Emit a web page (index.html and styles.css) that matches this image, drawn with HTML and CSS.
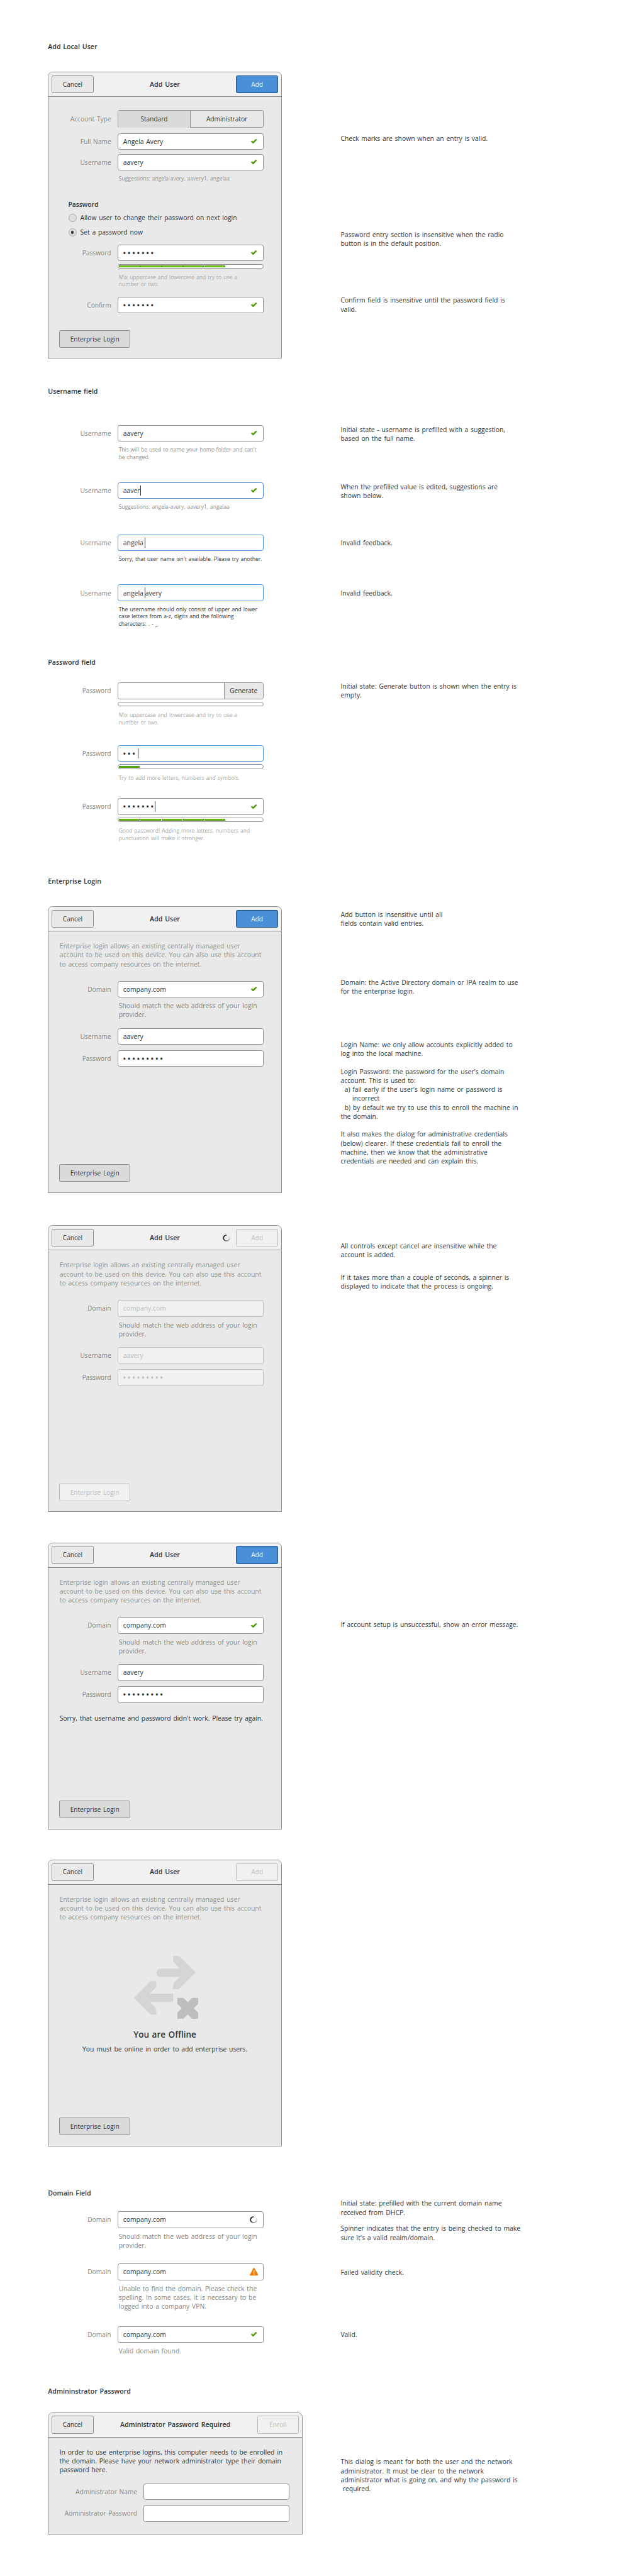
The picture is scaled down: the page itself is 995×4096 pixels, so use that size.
FILE: index.html
```
<!DOCTYPE html>
<html lang="en">
<head>
<meta charset="utf-8">
<title>Add User</title>
<link rel="stylesheet" href="styles.css">
</head>
<body>
<svg class="defs" width="0" height="0" aria-hidden="true">
  <symbol id="check" viewBox="0 0 11 9"><path d="M1.7 4.7 4.1 7 9.3 1.7" fill="none" stroke="#4e9a06" stroke-width="3" stroke-linecap="round"/></symbol>
  <symbol id="warning" viewBox="0 0 16 15"><path d="M8 0C8.6 0 9 .3 9.3.9L15.8 13.2C16.3 14.2 15.8 15 14.8 15H1.2C.2 15-.3 14.2.2 13.2L6.7.9C7 .3 7.4 0 8 0Z" fill="#f57900"/><path d="M7.1 4.2H8.9V10H7.1ZM7.1 11.2H8.9V13H7.1Z" fill="#fff"/></symbol>
</svg>
<main class="sheet">

<section class="section s-local">
  <h2>Add Local User</h2>
  <div class="specimens">
    <div class="dialog">
      <header class="bar"><span class="btn">Cancel</span><b class="title">Add User</b><span class="btn primary">Add</span></header>
      <div class="body">
        <div class="field tall"><label>Account Type</label><div class="switch"><span class="on">Standard</span><span>Administrator</span></div></div>
        <div class="field g10"><label>Full Name</label><div class="entry">Angela Avery<svg class="check"><use href="#check"/></svg></div></div>
        <div class="field g8"><label>Username</label><div class="entry">aavery<svg class="check"><use href="#check"/></svg></div></div>
        <p class="hint">Suggestions: angela-avery, aavery1, angelaa</p>
        <h3 class="group">Password</h3>
        <div class="radio r1"><i></i>Allow user to change their password on next login</div>
        <div class="radio r2"><i class="sel"></i>Set a password now</div>
        <div class="field g15"><label>Password</label><div class="entry"><span class="dots">•••••••</span><svg class="check"><use href="#check"/></svg></div></div>
        <div class="meter"><i></i><i></i><i></i><i></i><i></i></div>
        <p class="hint faint">Mix uppercase and lowercase and try to use a<br>number or two.</p>
        <div class="field g15"><label>Confirm</label><div class="entry"><span class="dots">•••••••</span><svg class="check"><use href="#check"/></svg></div></div>
        <span class="btn mode">Enterprise Login</span>
      </div>
    </div>
    <div class="notes">
      <p class="n-check">Check marks are shown when an entry is valid.</p>
      <p class="n-section">Password entry section is insensitive when the radio<br>button is in the default position.</p>
      <p class="n-confirm">Confirm field is insensitive until the password field is<br>valid.</p>
    </div>
  </div>
</section>

<section class="section s-username">
  <h2>Username field</h2>
  <div class="specimens">
    <div class="free">
      <div class="field"><label>Username</label><div class="entry">aavery<svg class="check"><use href="#check"/></svg></div></div>
      <p class="hint">This will be used to name your home folder and can't<br>be changed.</p>
    </div>
    <div class="notes"><p class="n-two">Initial state - username is prefilled with a suggestion,<br>based on the full name.</p></div>
    <div class="free">
      <div class="field"><label>Username</label><div class="entry focus">aaver<i class="caret"></i><svg class="check"><use href="#check"/></svg></div></div>
      <p class="hint">Suggestions: angela-avery, aavery1, angelaa</p>
    </div>
    <div class="notes"><p class="n-two">When the prefilled value is edited, suggestions are<br>shown below.</p></div>
    <div class="free">
      <div class="field"><label>Username</label><div class="entry focus">angela<i class="caret gap"></i></div></div>
      <p class="hint dark">Sorry, that user name isn't available. Please try another.</p>
    </div>
    <div class="notes"><p class="n-one">Invalid feedback.</p></div>
    <div class="free">
      <div class="field"><label>Username</label><div class="entry focus">angela<i class="caret gap"></i>avery</div></div>
      <p class="hint dark">The username should only consist of upper and lower<br>case letters from a-z, digits and the following<br>characters: . - _</p>
    </div>
    <div class="notes"><p class="n-one">Invalid feedback.</p></div>
  </div>
</section>

<section class="section s-password">
  <h2>Password field</h2>
  <div class="specimens">
    <div class="free">
      <div class="field"><label>Password</label><div class="entry"><span class="generate">Generate</span></div></div>
      <div class="meter"></div>
      <p class="hint faint">Mix uppercase and lowercase and try to use a<br>number or two.</p>
    </div>
    <div class="notes"><p class="n-gen">Initial state: Generate button is shown when the entry is<br>empty.</p></div>
    <div class="free">
      <div class="field"><label>Password</label><div class="entry focus"><span class="dots">•••</span><i class="caret gap"></i></div></div>
      <div class="meter"><i></i></div>
      <p class="hint faint">Try to add more letters, numbers and symbols.</p>
    </div>
    <div class="notes"></div>
    <div class="free">
      <div class="field"><label>Password</label><div class="entry"><span class="dots">•••••••</span><i class="caret"></i><svg class="check"><use href="#check"/></svg></div></div>
      <div class="meter"><i></i><i></i><i></i><i></i><i></i></div>
      <p class="hint faint">Good password! Adding more letters, numbers and<br>punctuation will make it stronger.</p>
    </div>
    <div class="notes"></div>
  </div>
</section>

<section class="section s-enterprise">
  <h2>Enterprise Login</h2>
  <div class="specimens">
    <div class="dialog">
      <header class="bar"><span class="btn">Cancel</span><b class="title">Add User</b><span class="btn primary">Add</span></header>
      <div class="body">
        <p class="intro">Enterprise login allows an existing centrally managed user<br>account to be used on this device. You can also use this account<br>to access company resources on the internet.</p>
        <div class="field g24"><label>Domain</label><div class="entry">company.com<svg class="check"><use href="#check"/></svg></div></div>
        <p class="help">Should match the web address of your login<br>provider.</p>
        <div class="field g17"><label>Username</label><div class="entry">aavery</div></div>
        <div class="field g10"><label>Password</label><div class="entry"><span class="dots">•••••••••</span></div></div>
        <span class="btn mode">Enterprise Login</span>
      </div>
    </div>
    <div class="notes">
      <p class="n-add">Add button is insensitive until all<br>fields contain valid entries.</p>
      <p class="n-domain">Domain: the Active Directory domain or IPA realm to use<br>for the enterprise login.</p>
      <p class="n-login">Login Name: we only allow accounts explicitly added to<br>log into the local machine.</p>
      <p class="n-para">Login Password: the password for the user's domain<br>account. This is used to:<br><span class="in1">a) fail early if the user's login name or password is</span><br><span class="in2">incorrect</span><br><span class="in1">b) by default we try to use this to enroll the machine in</span><br>the domain.</p>
      <p class="n-para">It also makes the dialog for administrative credentials<br>(below) clearer. If these credentials fail to enroll the<br>machine, then we know that the administrative<br>credentials are needed and can explain this.</p>
    </div>

    <div class="dialog busy">
      <header class="bar"><span class="btn">Cancel</span><b class="title">Add User</b><i class="spinner"></i><span class="btn off">Add</span></header>
      <div class="body">
        <p class="intro">Enterprise login allows an existing centrally managed user<br>account to be used on this device. You can also use this account<br>to access company resources on the internet.</p>
        <div class="field g24"><label>Domain</label><div class="entry">company.com</div></div>
        <p class="help">Should match the web address of your login<br>provider.</p>
        <div class="field g17"><label>Username</label><div class="entry">aavery</div></div>
        <div class="field g10"><label>Password</label><div class="entry"><span class="dots">•••••••••</span></div></div>
        <span class="btn mode off">Enterprise Login</span>
      </div>
    </div>
    <div class="notes">
      <p class="n-all">All controls except cancel are insensitive while the<br>account is added.</p>
      <p class="n-spin">If it takes more than a couple of seconds, a spinner is<br>displayed to indicate that the process is ongoing.</p>
    </div>

    <div class="dialog">
      <header class="bar"><span class="btn">Cancel</span><b class="title">Add User</b><span class="btn primary">Add</span></header>
      <div class="body">
        <p class="intro">Enterprise login allows an existing centrally managed user<br>account to be used on this device. You can also use this account<br>to access company resources on the internet.</p>
        <div class="field g24"><label>Domain</label><div class="entry">company.com<svg class="check"><use href="#check"/></svg></div></div>
        <p class="help">Should match the web address of your login<br>provider.</p>
        <div class="field g17"><label>Username</label><div class="entry">aavery</div></div>
        <div class="field g10"><label>Password</label><div class="entry"><span class="dots">•••••••••</span></div></div>
        <p class="error">Sorry, that username and password didn't work. Please try again.</p>
        <span class="btn mode">Enterprise Login</span>
      </div>
    </div>
    <div class="notes"><p class="n-fail">If account setup is unsuccessful, show an error message.</p></div>

    <div class="dialog">
      <header class="bar"><span class="btn">Cancel</span><b class="title">Add User</b><span class="btn off">Add</span></header>
      <div class="body">
        <p class="intro">Enterprise login allows an existing centrally managed user<br>account to be used on this device. You can also use this account<br>to access company resources on the internet.</p>
        <svg class="offline" viewBox="0 0 123 120.5">
          <path fill="#d4d4d4" d="M75 0H83Q86.500 0 89 3L118 32 89 61Q86.500 64 83 64H75V57Q75 53.500 77.500 51L87.500 40.500H51A8 8 0 0 1 51 24.500H87.500L77.500 14Q75 11.500 75 8Z"/>
          <path fill="#d4d4d4" d="M43 48.500H35Q31.500 48.500 29 51.500L0 80.400 29 109.500Q31.500 112.500 35 112.500H43V105.500Q43 101.500 40.500 99L30 88.400H75V72.300H30L40.500 62Q43 59.500 43 56Z"/>
          <path fill="#bebebe" d="M83 80.400H94.500L103 88.700 111.500 80.400H123V92L114.500 100.500 123 109V120.500H111.500L103 112.300 94.500 120.500H83V109L91.500 100.500 83 92Z"/>
        </svg>
        <h3 class="big">You are Offline</h3>
        <p class="sub">You must be online in order to add enterprise users.</p>
        <span class="btn mode">Enterprise Login</span>
      </div>
    </div>
    <div class="notes"></div>
  </div>
</section>

<section class="section s-domain">
  <h2>Domain Field</h2>
  <div class="specimens">
    <div class="free">
      <div class="field"><label>Domain</label><div class="entry">company.com<i class="spinner"></i></div></div>
      <p class="help">Should match the web address of your login<br>provider.</p>
    </div>
    <div class="notes"><p class="n-dhcp">Initial state: prefilled with the current domain name<br>received from DHCP.</p><p class="n-realm">Spinner indicates that the entry is being checked to make<br>sure it's a valid realm/domain.</p></div>
    <div class="free">
      <div class="field"><label>Domain</label><div class="entry">company.com<svg class="warning"><use href="#warning"/></svg></div></div>
      <p class="help">Unable to find the domain. Please check the<br>spelling. In some cases, it is necessary to be<br>logged into a company VPN.</p>
    </div>
    <div class="notes"><p class="n-one">Failed validity check.</p></div>
    <div class="free">
      <div class="field"><label>Domain</label><div class="entry">company.com<svg class="check"><use href="#check"/></svg></div></div>
      <p class="help">Valid domain found.</p>
    </div>
    <div class="notes"><p class="n-one">Valid.</p></div>
  </div>
</section>

<section class="section s-admin">
  <h2>Admininstrator Password</h2>
  <div class="specimens">
    <div class="dialog wide">
      <header class="bar"><span class="btn">Cancel</span><b class="title">Administrator Password Required</b><span class="btn off">Enroll</span></header>
      <div class="body">
        <p class="intro dark">In order to use enterprise logins, this computer needs to be enrolled in<br>the domain. Please have your network administrator type their domain<br>password here.</p>
        <div class="field g17"><label>Administrator Name</label><div class="entry"></div></div>
        <div class="field g10"><label>Administrator Password</label><div class="entry"></div></div>
      </div>
    </div>
    <div class="notes"><p class="n-admin">This dialog is meant for both the user and the network<br>administrator. It must be clear to the network<br>administrator what is going on, and why the password is<br><span class="in0">required.</span></p></div>
  </div>
</section>

</main>
</body>
</html>
```
FILE: styles.css
```
/* All measures are multiples of one drawing unit. */
:root {
  --u: .829167px;
  --line: #8e908e;
  --ink: #2e3436;
  --dim: #858783;
}
* { box-sizing: border-box; }
body {
  margin: 0;
  background: #fff;
  color: var(--ink);
  font-family: "Open Sans", "Noto Sans", sans-serif;
  font-size: calc(12.5 * var(--u));
  line-height: calc(17.25 * var(--u));
  word-spacing: calc(1.3 * var(--u));
  white-space: nowrap;
}
h2, h3, p { margin: 0; font-size: inherit; font-weight: inherit; }
.defs { position: absolute; }
.sheet { height: calc(4940 * var(--u)); padding: calc(80 * var(--u)) 0 0 calc(92 * var(--u)); overflow: hidden; }

.section h2 {
  height: calc(20 * var(--u));
  line-height: calc(20 * var(--u));
  font-size: calc(12.8 * var(--u));
  font-weight: 600;
}
.specimens { display: grid; grid-template-columns: calc(561 * var(--u)) 1fr; align-items: start; }
.s-local .specimens { margin-top: calc(38 * var(--u)); grid-template-rows: calc(602 * var(--u)); }
.s-username .specimens { margin-top: calc(55 * var(--u)); grid-template-rows: calc(110 * var(--u)) calc(100 * var(--u)) calc(96 * var(--u)) calc(139 * var(--u)); }
.s-password .specimens { margin-top: calc(29 * var(--u)); grid-template-rows: calc(120 * var(--u)) calc(102 * var(--u)) calc(149 * var(--u)); }
.s-enterprise .specimens { margin-top: calc(38 * var(--u)); grid-template-rows: calc(612 * var(--u)) calc(608 * var(--u)) calc(608 * var(--u)) calc(630 * var(--u)); }
.s-domain .specimens { margin-top: calc(25 * var(--u)); grid-template-rows: calc(100 * var(--u)) calc(120 * var(--u)) calc(115 * var(--u)); }
.s-admin .specimens { margin-top: calc(30 * var(--u)); }

/* dialogs */
.dialog {
  display: flex;
  flex-direction: column;
  width: calc(448 * var(--u));
  height: calc(550 * var(--u));
  border: 1px solid var(--line);
  border-radius: calc(9 * var(--u)) calc(9 * var(--u)) 0 0;
  background: #e9e9e9;
}
.dialog.wide { width: calc(488 * var(--u)); height: calc(234 * var(--u)); }
.bar {
  display: grid;
  grid-template-columns: calc(80 * var(--u)) 1fr calc(80 * var(--u));
  align-items: center;
  height: calc(47 * var(--u));
  padding: 0 calc(6 * var(--u));
  border-bottom: 1px solid var(--line);
  border-radius: calc(8 * var(--u)) calc(8 * var(--u)) 0 0;
  background: #f1f1f1;
}
.busy .bar { grid-template-columns: calc(80 * var(--u)) 1fr calc(14 * var(--u)) calc(80 * var(--u)); }
.busy .bar .title { padding-left: calc(14 * var(--u)); }
.busy .bar .spinner { margin: 0 calc(12 * var(--u)) 0 calc(-12 * var(--u)); }
.title { font-size: calc(12.8 * var(--u)); font-weight: 600; text-align: center; }
.btn {
  display: flex;
  align-items: center;
  justify-content: center;
  height: calc(34 * var(--u));
  border: 1px solid var(--line);
  border-radius: calc(3 * var(--u));
  background: #e9e9e9;
  font-size: calc(12.2 * var(--u));
}
.btn.primary { border-color: #1c5187; background: #4a90d9; color: #f1f5fa; }
.btn.off { border-color: #bcbdbc; background: #f1f1f1; color: #bebfbe; }
.btn.mode { width: calc(137 * var(--u)); margin: auto 0 0 calc(20 * var(--u)); background: #dadada; }
.btn.mode.off { background: #f1f1f1; }
.body { display: flex; flex-direction: column; flex: 1; padding-bottom: calc(20 * var(--u)); }
.s-local .body { padding-top: calc(25 * var(--u)); }

/* form rows */
.field {
  display: grid;
  grid-template-columns: calc(121 * var(--u)) calc(280 * var(--u));
  column-gap: calc(12 * var(--u));
  align-items: center;
  height: calc(32 * var(--u));
}
.dialog .field { margin-left: -1px; }
.wide .field { grid-template-columns: calc(171 * var(--u)) calc(280 * var(--u)); }
.field.tall { height: calc(34 * var(--u)); }
.field label {
  color: var(--dim);
  font-size: calc(12.3 * var(--u));
  text-align: right;
}
.g8 { margin-top: calc(8 * var(--u)); }
.g10 { margin-top: calc(10 * var(--u)); }
.g15 { margin-top: calc(15.4 * var(--u)); }
.g17 { margin-top: calc(17 * var(--u)); }
.g24 { margin-top: calc(24 * var(--u)); }
.entry {
  display: flex;
  align-items: center;
  height: calc(32 * var(--u));
  padding: 0 calc(11 * var(--u)) 0 calc(10 * var(--u));
  border: 1px solid var(--line);
  border-radius: calc(4 * var(--u));
  background: #fff;
}
.entry.focus { border-color: #4a90d9; }
.busy .entry { border-color: #bcbdbc; background: #f1f1f1; color: #bebfbe; }
.dots { margin-left: calc(-1 * var(--u)); font-size: calc(18 * var(--u)); letter-spacing: calc(2.1 * var(--u)); }
.caret { width: 1px; height: calc(20 * var(--u)); background: var(--ink); }
.caret.gap { margin-left: calc(2.5 * var(--u)); }
.check { width: calc(11 * var(--u)); height: calc(9 * var(--u)); margin-left: auto; }
.warning { width: calc(16 * var(--u)); height: calc(15 * var(--u)); margin: 0 calc(-2 * var(--u)) 0 auto; }
.spinner {
  width: calc(14 * var(--u));
  height: calc(14 * var(--u));
  border-radius: 50%;
  background: conic-gradient(transparent 0 45deg, rgba(46,52,54,.08) 60deg, rgba(46,52,54,.5) 180deg, #2e3436 265deg 355deg, transparent 358deg);
  -webkit-mask: radial-gradient(circle, transparent calc(4.2 * var(--u)), #000 calc(4.8 * var(--u)));
  mask: radial-gradient(circle, transparent calc(4.2 * var(--u)), #000 calc(4.8 * var(--u)));
}
.entry .spinner { margin-left: auto; }
.generate {
  display: flex;
  align-items: center;
  justify-content: center;
  align-self: stretch;
  width: calc(75 * var(--u));
  margin: 0 calc(-11 * var(--u)) 0 auto;
  border-left: 1px solid var(--line);
  border-radius: 0 calc(3 * var(--u)) calc(3 * var(--u)) 0;
  background: #e9e9e9;
  font-size: calc(12.2 * var(--u));
}
.switch {
  display: grid;
  grid-template-columns: 141fr 139fr;
  height: calc(34 * var(--u));
  border: 1px solid var(--line);
  border-radius: calc(3 * var(--u));
  font-size: calc(12.2 * var(--u));
  text-align: center;
  line-height: calc(32 * var(--u));
}
.switch .on { background: #dadada; border-right: 1px solid var(--line); }
.meter {
  display: flex;
  align-items: center;
  gap: calc(1 * var(--u));
  width: calc(280 * var(--u));
  height: calc(9 * var(--u));
  margin: calc(5 * var(--u)) 0 0 calc(133 * var(--u));
  padding-left: calc(2 * var(--u));
  border: 1px solid var(--line);
  border-radius: calc(5 * var(--u));
  background: #fff;
}
.dialog .meter { margin-left: calc(132 * var(--u)); }
.meter i { width: calc(40 * var(--u)); height: 3px; border: 1px solid #4e9a06; background: #73d216; }
.meter + .hint { margin-top: calc(10.5 * var(--u)); }
.hint {
  margin: calc(9.5 * var(--u)) 0 0 calc(135.5 * var(--u));
  color: #8e908c;
  font-size: calc(10.3 * var(--u));
  line-height: calc(14 * var(--u));
  word-spacing: calc(1 * var(--u));
}
.faint { color: #a9aba7; }
.dark, .hint.dark { color: var(--ink); }
.help { margin: calc(7 * var(--u)) 0 0 calc(135.5 * var(--u)); color: var(--dim); }
.dialog .hint, .dialog .help { margin-left: calc(134.5 * var(--u)); }
.group { margin: calc(33 * var(--u)) 0 0 calc(37.5 * var(--u)); line-height: calc(18 * var(--u)); font-weight: 600; }
.radio { display: flex; align-items: center; gap: calc(7 * var(--u)); height: calc(16 * var(--u)); margin-left: calc(38 * var(--u)); }
.radio i { display: grid; place-items: center; width: calc(15.5 * var(--u)); height: calc(15.5 * var(--u)); border: 1px solid #a4a6a4; border-radius: 50%; background: #dfdfdf; }
.radio .sel::before { content: ""; width: calc(5.5 * var(--u)); height: calc(5.5 * var(--u)); border-radius: 50%; background: var(--ink); }
.r1 { margin-top: calc(8 * var(--u)); }
.r2 { margin-top: calc(12 * var(--u)); }
.intro { margin: calc(19.4 * var(--u)) 0 0 calc(21 * var(--u)); color: #929490; }
.intro.dark { color: var(--ink); }
.error { margin: calc(21 * var(--u)) 0 0 calc(21 * var(--u)); }
.offline { width: calc(123 * var(--u)); height: calc(120.5 * var(--u)); margin: calc(65.5 * var(--u)) 0 0 calc(164 * var(--u)); }
.big { margin-top: calc(20 * var(--u)); font-size: calc(16.3 * var(--u)); font-weight: 600; line-height: calc(22 * var(--u)); text-align: center; }
.sub { margin-top: calc(8 * var(--u)); text-align: center; }

/* notes column */
.n-check { margin-top: calc(118.5 * var(--u)); }
.n-section { margin-top: calc(167.5 * var(--u)); }
.n-confirm { margin-top: calc(91.5 * var(--u)); }
.n-two { margin-top: 0; }
.n-one { margin-top: calc(8 * var(--u)); }
.n-gen { margin-top: calc(-2 * var(--u)); }
.n-add { margin-top: calc(7 * var(--u)); }
.n-domain { margin-top: calc(96 * var(--u)); }
.n-login { margin-top: calc(85 * var(--u)); }
.n-para { margin-top: calc(16.8 * var(--u)); }
.n-all { margin-top: calc(31 * var(--u)); }
.n-spin { margin-top: calc(25.5 * var(--u)); }
.n-fail { margin-top: calc(149.5 * var(--u)); }
.n-dhcp { margin-top: calc(-24 * var(--u)); }
.n-realm { margin-top: calc(13.5 * var(--u)); }
.n-admin { margin-top: calc(86.5 * var(--u)); }
.in0 { padding-left: calc(4 * var(--u)); }
.in1 { padding-left: calc(7.5 * var(--u)); }
.in2 { padding-left: calc(22.5 * var(--u)); }
```
